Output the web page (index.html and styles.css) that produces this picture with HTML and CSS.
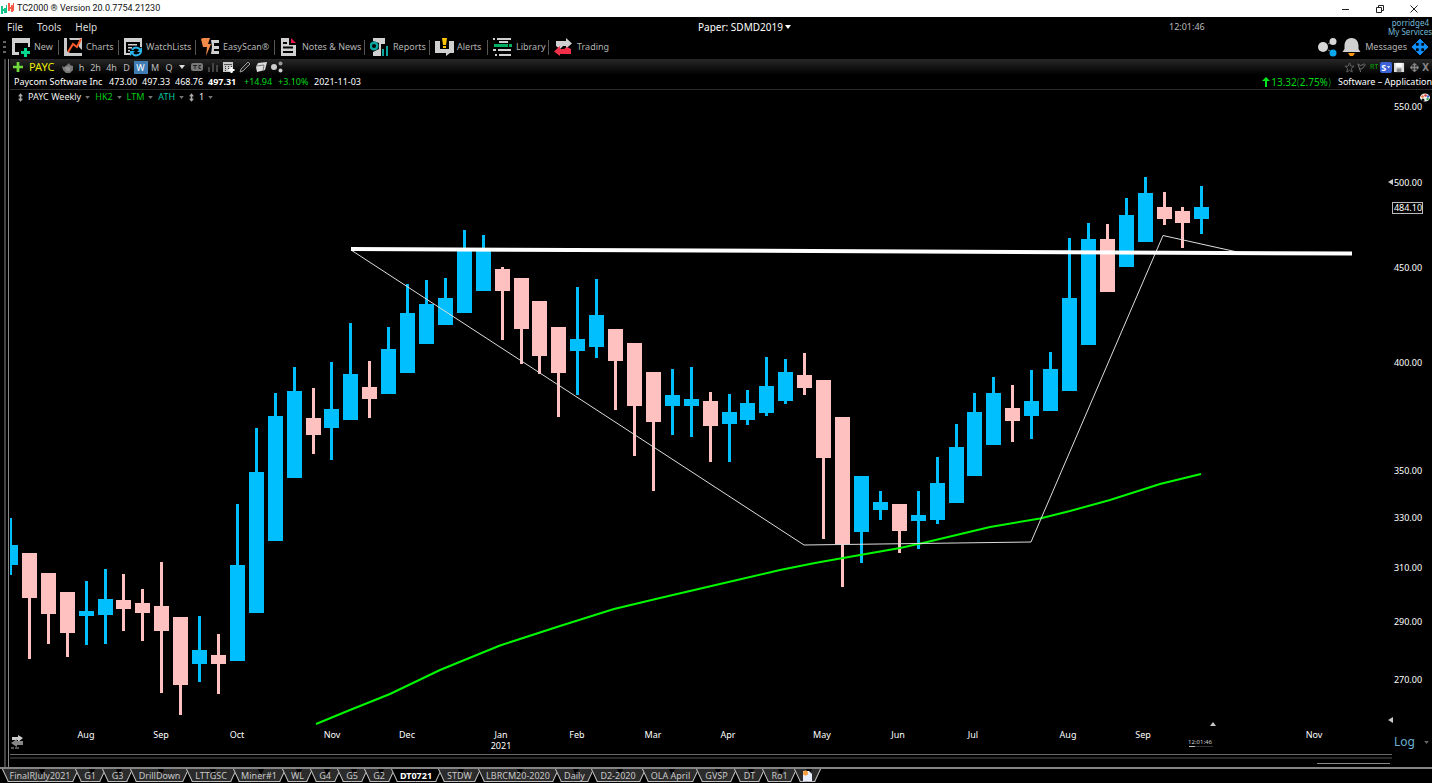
FILE: index.html
```html
<!DOCTYPE html>
<html lang="en">
<head>
<meta charset="utf-8">
<title>TC2000</title>
<link rel="stylesheet" href="styles.css">
</head>
<body>
<svg class="defs" aria-hidden="true">
  <symbol id="caret" viewBox="0 0 6 4"><path d="M0 0h6L3 4z" fill="currentColor"/></symbol>
  <symbol id="updown" viewBox="0 0 6 10"><path d="M3 0l3 3.500H4v3h2L3 10 0 6.500h2v-3H0z" fill="currentColor"/></symbol>
  <symbol id="move" viewBox="0 0 18 18"><path d="M9 0l4 4h-3v4h4V5l4 4-4 4v-3h-4v4h3l-4 4-4-4h3v-4H4v3L0 9l4-4v3h4V4H5z" fill="currentColor" stroke="currentColor"/></symbol>
</svg>

<header class="titlebar">
  <svg class="logo" viewBox="0 0 13 13"><g fill="#12c489"><path d="M0 4h2v8H0zM3 6h2v5H3zM0 7h5v2H0zM5 3h1v8H5z"/></g><g fill="#fa5a46"><path d="M7 1h2v8H7zM10 3h2v7h-2zM8 5h3v2H8zM12 1h1v8h-1z"/></g></svg>
  <span class="title">TC2000 ® Version 20.0.7754.21230</span>
  <button class="win" aria-label="Minimize"><svg viewBox="0 0 10 10"><path d="M1 5.500h7" stroke="#222" fill="none"/></svg></button>
  <button class="win" aria-label="Restore"><svg viewBox="0 0 10 10"><path d="M1.500 3.500h5v5h-5zM3.500 3V1.500h5v5H7" stroke="#222" fill="none"/></svg></button>
  <button class="win" aria-label="Close"><svg viewBox="0 0 10 10"><path d="M1.500 1.500l7 7M8.500 1.500l-7 7" stroke="#222" fill="none"/></svg></button>
</header>

<nav class="menubar">
  <div class="menus"><button>File</button><button>Tools</button><button>Help</button></div>
  <label class="account"><select aria-label="Account"><option>Paper: SDMD2019</option></select><svg class="caret"><use href="#caret"/></svg></label>
  <time class="clock">12:01:46</time>
  <div class="user"><a href="#">porridge4</a><a href="#">My Services</a></div>
</nav>

<nav class="toolbar">
  <svg class="grip" viewBox="0 0 3 14"><path d="M0 1h3v2H0zM0 6h3v2H0zM0 11h3v2H0z" fill="#666"/></svg>
  <button class="tool t-new"><svg viewBox="0 0 19 19"><path d="M0 0h18v9h-2V5H3v9h4v3H0z" fill="#d0d0d0"/><path d="M12 10h3v3h3v3h-3v3h-3v-3H9v-3h3z" fill="#00d890"/></svg>New</button>
  <button class="tool t-charts"><svg viewBox="0 0 19 19"><path d="M0 0h3v13l3 2h12v3H0zM5 0h13v12l-3-3V5l2-3H6z" fill="#c8c8c8"/><path d="M4 14l5-8 4 3 4-8" stroke="#ff5a2a" stroke-width="2" fill="none"/></svg>Charts</button>
  <button class="tool t-watch"><svg viewBox="0 0 19 19"><path d="M0 0h18v9h-2V4H2v11h4v2H0zM4 6h9v1.500H4zM4 9h4v1.500H4zM4 12h2v1.500H4z" fill="#d0d0d0"/><path d="M8 12a5 5 0 0 1 9 1M17 14a5 5 0 0 1-9 1" stroke="#2ab4ea" stroke-width="2" fill="none"/><path d="M18 9v5h-5zM6 18v-5h5z" fill="#2ab4ea"/></svg>WatchLists</button>
  <button class="tool t-scan"><svg viewBox="0 0 19 19"><path d="M2 0h7l-2 6h3L5 18l1-9H2L0 1z" fill="#f58a48"/><path d="M10 2h8v3h-5v3h5v3h-5v2h5v3h-8l1-7z" fill="#d0d0d0"/></svg>EasyScan®</button>
  <button class="tool t-notes"><svg viewBox="0 0 19 19"><path d="M1 0h8v7h7v11H1z" fill="#d0d0d0"/><path d="M3 5h4M3 9.500h10M3 14h10" stroke="#000" stroke-width="2"/><path d="M11 0l5 5h-5z" fill="#e8184c"/></svg>Notes &amp; News</button>
  <button class="tool t-reports"><svg viewBox="0 0 19 19"><path d="M3 0h12v6h-4v12H3v-4l6-3V5L3 3z" fill="#d0d0d0"/><circle cx="4" cy="8" r="3.300" fill="none" stroke="#0aa5a0" stroke-width="2.500"/><path d="M12 11h2v7h-2zM16 8h2v10h-2z" fill="#0aa5a0"/></svg>Reports</button>
  <button class="tool t-alerts"><svg viewBox="0 0 19 19"><path d="M0 3h5v8h9V3h5v12h-4l-4 3v-3H0z" fill="#d0d0d0"/><path d="M7 0h5l-1 7H8zM8 8h3v2H8z" fill="#ffc400"/></svg>Alerts</button>
  <button class="tool t-library"><svg viewBox="0 0 19 19"><path d="M0 1h2M4 1h14M0 12h3M5 12h13M2 17h2M6 17h12M6 4h9" stroke="#d0d0d0" stroke-width="2"/><path d="M1 7.500h14M16 7.500h3" stroke="#00b060" stroke-width="3"/></svg>Library</button>
  <button class="tool t-trading"><svg viewBox="0 0 19 19"><path d="M2 3h10V0l6 5.500-6 5V8H9l-3 3-4-3z" fill="#d0d0d0"/><path d="M0 13.500L6 8v3h4l3-2 4 2v5H6v2z" fill="#f03048"/></svg>Trading</button>
  <span class="spacer"></span>
  <button class="rtool" aria-label="Share"><svg viewBox="0 0 19 19"><circle cx="5" cy="9" r="5" fill="#d6d6d6"/><circle cx="15" cy="3.500" r="3.500" fill="#d6d6d6"/><circle cx="15" cy="15" r="3.500" fill="#08a8ea"/><path d="M10 6l2-1M10 12l2 1" stroke="#888"/></svg></button>
  <button class="rtool messages"><svg viewBox="0 0 19 19"><path d="M9.500 0c5 0 7 4 7 8v3l2 3h-18l2-3V8c0-4 2-8 7-8z" fill="#d0d0d0"/><path d="M6 15h7l-2 3H8z" fill="#ff9a10"/></svg>Messages</button>
  <button class="rtool blue" aria-label="Move"><svg><use href="#move"/></svg></button>
</nav>

<main class="workspace">
  <section class="panel">
    <div class="symbolbar">
      <button class="add" aria-label="Add"><svg viewBox="0 0 11 11"><path d="M4 0h3v4h4v3H7v4H4V7H0V4h4z" fill="#6ed83c"/></svg></button>
      <strong class="ticker">PAYC</strong>
      <svg class="ic hand" viewBox="0 0 11 11"><path d="M0 4l2 1 3-2 2-2 1 2 3 1v4l-3 3H4L1 8z" fill="#777"/><path d="M3 6h5M4 8h4" stroke="#aaa"/></svg>
      <div class="frames"><button>h</button><button>2h</button><button>4h</button><button>D</button><button class="on">W</button><button>M</button><button>Q</button><button aria-label="More"><svg class="caret"><use href="#caret"/></svg></button></div>
      <div class="icons">
        <svg viewBox="0 0 12 12"><rect y="2" width="12" height="8" rx="2" fill="#777"/><path d="M2 4.500h4M4 4.500V8M10 4.500H8v3h2" stroke="#222" fill="none"/></svg>
        <svg viewBox="0 0 12 12"><path d="M1 6h2v5H1zM5 2h2v9H5zM9 4h2v7H9z" fill="#444"/></svg>
        <svg viewBox="0 0 12 12"><path d="M0 1h10v10H0z" fill="#c8c8c8"/><path d="M1 3.500h8" stroke="#555"/><path d="M2 5.500h1M5 5.500h1M8 5.500h1M2 7.500h1M5 7.500h1M2 9.500h1" stroke="#333"/><path d="M8.500 6v6M5.500 9h6" stroke="#fff" stroke-width="2"/></svg>
        <svg viewBox="0 0 12 12"><path d="M1 11l1-3 7-7 2 2-7 7z" fill="#222" stroke="#999"/></svg>
        <svg viewBox="0 0 12 12"><path d="M3 2l9-1-2 8-8 2-1-5z" fill="#ddd"/><path d="M1 5l8-1-1 6" stroke="#777" fill="none"/></svg>
        <svg viewBox="0 0 12 12"><circle cx="3" cy="6" r="3" fill="#ccc"/><circle cx="9.500" cy="2.500" r="2" fill="#999"/><circle cx="9.500" cy="9.500" r="2" fill="#ccc"/></svg>
      </div>
      <span class="spacer"></span>
      <div class="status">
        <svg viewBox="0 0 12 12"><path d="M6 1l1.500 3.500H11L8 7l1 4-3-2-3 2 1-4-3-2.500h3.500z" fill="none" stroke="#666"/></svg>
        <svg viewBox="0 0 12 12"><path d="M4 11L1 2l3 2 4-2 1 1-3 4-3 1" fill="none" stroke="#777"/></svg>
        <span class="rt">RT</span>
        <button class="s">S<svg viewBox="0 0 6 4"><path d="M0 0h5L2.500 3z" fill="#fff"/></svg></button>
        <svg viewBox="0 0 12 12"><path d="M0 1h11v10H0z" fill="#ddd"/><path d="M3 7h5v4H3z" fill="#888"/><path d="M2 1h7v4H2z" fill="#fff"/></svg>
        <svg class="mv"><use href="#move"/></svg>
        <button class="x">X</button>
      </div>
    </div>
    <div class="quote">
      <span>Paycom Software Inc</span><span>473.00</span><span>497.33</span><span>468.76</span><b>497.31</b><span class="up">+14.94</span><span class="up">+3.10%</span><span>2021-11-03</span>
      <span class="rank"><svg viewBox="0 0 8 10"><path d="M4 0l4 4H5v6H3V4H0z" fill="#00e818"/></svg>13.32<i>(</i>2.75%<i>)</i></span><span class="sector">Software – Application</span>
    </div>
    <div class="legend">
      <svg class="ud"><use href="#updown"/></svg>
      <button>PAYC Weekly<svg class="caret"><use href="#caret"/></svg></button>
      <button class="hk">HK2<svg class="caret"><use href="#caret"/></svg></button>
      <button class="hk">LTM<svg class="caret"><use href="#caret"/></svg></button>
      <button class="ath">ATH<svg class="caret"><use href="#caret"/></svg></button>
      <svg class="ud"><use href="#updown"/></svg>
      <button>1<svg class="caret"><use href="#caret"/></svg></button>
      <span class="spacer"></span>
      <svg class="palette" viewBox="0 0 10 9"><ellipse cx="5" cy="4.500" rx="5" ry="4" fill="#eee"/><circle cx="2.500" cy="3.500" r="1.200" fill="#e66a28"/><circle cx="5.500" cy="2.500" r="1.200" fill="#e03030"/><circle cx="8" cy="3.500" r="1.200" fill="#3868d8"/><circle cx="7.500" cy="6" r="1.200" fill="#30a850"/><circle cx="3" cy="7" r="1.500" fill="#111"/></svg>
    </div>
    <div class="chart">
      <svg id="plot" class="plot" viewBox="10 102 1422 665" role="img" aria-label="PAYC weekly candlestick chart">
        <g id="candles"></g>
        <path class="average" d="M316 724L350 710 390 694 440 670 500 645.500 560 626 614 609 660 598 720 584 780 570 815 563 843 558 900 548 925 542.500 990 527 1040 518.500 1070 511 1110 500 1160 484 1201 474"/>
        <path class="trend" d="M351 250L804 545 1031 542 1163 235.500 1235 251.500"/>
        <path class="resistance" d="M351 249L1352 253.500"/>
        <g id="months" class="months"></g>
        <g id="prices" class="prices"></g>
        <rect x="1392.500" y="202.500" width="30" height="11" fill="#000" stroke="#bbb"/>
        <text class="last" x="1408" y="211">484.10</text>
        <path d="M1388 182l5-3v6zM1388 720l5-3v6zM1210 726h6l-3-4z" fill="#c8c8c8"/>
        <text class="tiny" x="1200" y="744">12:01:46</text>
        <path d="M1189 746.500h24" stroke="#333"/><path d="M1189 746.500h6" stroke="#bbb"/>
        <path d="M12 737h6v-2l5 3-5 4v-2h-6z" fill="#ccc"/><path d="M23 741h-6v-2l-6 4 6 4v-2h6z" fill="#888"/><path d="M11 748h3M15 748h4" stroke="#aaa"/>
        <path d="M10 754.500H1392" stroke="#666"/><path d="M10 758H1392" stroke="#2a2a2a" stroke-width="2"/>
        <path d="M1317 763.500H1390" stroke="#888"/>
      </svg>
      <label class="scale"><select aria-label="Scale"><option>Log</option></select><svg class="caret"><use href="#caret"/></svg></label>
    </div>
  </section>
</main>

<nav class="tabs">
  <button class="w73"><span>FinalRJuly2021</span></button><button><span>G1</span></button><button class="w28"><span>G3</span></button><button class="w56"><span>DrillDown</span></button><button class="w47"><span>LTTGSC</span></button><button class="w49"><span>Miner#1</span></button><button class="w28"><span>WL</span></button><button><span>G4</span></button><button><span>G5</span></button><button><span>G2</span></button><button class="w47 current"><span>DT0721</span></button><button class="w40"><span>STDW</span></button><button class="w77"><span>LBRCM20-2020</span></button><button class="w36"><span>Daily</span></button><button class="w51"><span>D2-2020</span></button><button class="w54"><span>OLA April</span></button><button class="w38"><span>GVSP</span></button><button class="w28"><span>DT</span></button><button class="w32"><span>Ro1</span></button><button class="w24" aria-label="New tab"><span><svg viewBox="0 0 9 11"><path d="M0 1h6l3 3v7H0z" fill="#e8eefc"/><circle cx="2.500" cy="3" r="2.500" fill="#f8a040"/></svg></span></button>
</nav>
<script src="chart.js"></script>
</body>
</html>
```
FILE: styles.css
```css
* { box-sizing: border-box; }
body { margin: 0; min-height: 100vh; display: flex; flex-direction: column; overflow: hidden; background: #000; color: #fff; font: 10px/12px "Noto Sans", "Open Sans", sans-serif; }
button, select { margin: 0; padding: 0; border: 0; background: none; color: inherit; font: inherit; white-space: nowrap; appearance: none; }
svg { display: block; flex: none; }
a { color: inherit; text-decoration: none; }
.defs { position: absolute; width: 0; height: 0; }
.spacer { flex: 1; }
.caret { width: 5px; height: 3px; }

.titlebar { height: 17px; display: flex; align-items: center; background: #fff; color: #111; font: 9px/17px Roboto, sans-serif; }
.logo { width: 13px; height: 13px; margin: 0 3px 0 1px; }
.title { flex: 1; }
.win { width: 34px; height: 17px; display: flex; justify-content: center; align-items: center; }
.win:last-child { margin-right: 1px; }
.win svg { width: 10px; height: 10px; }

.menubar { height: 19px; display: grid; grid-template-columns: 698fr 471fr 180fr 83fr; align-items: center; color: #ddd; }
.menus { display: flex; gap: 14px; padding-left: 7px; }
.account { display: flex; align-items: center; gap: 2px; color: #fff; }
.account .caret { width: 6px; height: 4px; }
.clock { font-size: 9px; color: #bbb; }
.user { display: flex; flex-direction: column; align-items: flex-end; color: #75b8d8; font-size: 8px; line-height: 9px; }
.user a:first-child { margin-right: 3px; }

.toolbar { height: 23px; padding-bottom: 1px; display: flex; align-items: center; color: #b4b4b4; font-size: 9px; }
.grip { width: 3px; height: 14px; margin: 0 6px 0 3px; }
.tool { display: flex; align-items: center; gap: 3px; height: 19px; position: relative; }
.tool svg { width: 19px; height: 19px; }
.tool + .tool::before { content: ""; position: absolute; left: -6px; top: 2px; height: 15px; border-left: 1px solid #555; }
.t-new { width: 52px; }
.t-charts { width: 60px; }
.t-watch { width: 77px; }
.t-scan { width: 79px; }
.t-notes { width: 90px; }
.t-reports { width: 65px; gap: 4px; }
.t-alerts { width: 58px; }
.t-library { width: 61px; gap: 4px; }
.t-trading { gap: 4px; }
.rtool { display: flex; align-items: center; gap: 4px; margin-right: 5px; }
.rtool svg { width: 19px; height: 19px; }
.messages { margin-right: 3px; }
.blue { color: #1090ff; margin: 0 4px 0 2px; }
.blue svg { width: 16px; height: 16px; }

.workspace { flex: 1; margin-left: 4px; padding-left: 2px; border-left: 2px solid #444; }
.panel { height: 100%; padding-left: 1px; border-left: 1px solid #888; }
.symbolbar { height: 16px; display: flex; align-items: center; padding-left: 3px; background: linear-gradient(#272727, #000); color: #bbb; }
.add svg { width: 10px; height: 10px; }
.ticker { width: 27px; margin: 0 6px; color: #e8e800; font: 11px/14px "Noto Sans", sans-serif; }
.ic { width: 11px; height: 11px; }
.frames { display: grid; grid-template-columns: 13px 15px 17px 13px 15px 14px 14px 12px; margin-left: 2px; font-size: 9px; justify-items: center; align-items: center; }
.frames .on { width: 14px; background: #3f7db4; color: #fff; }
.frames button { line-height: 13px; }
.frames .caret { width: 6px; height: 4px; color: #ddd; }
.icons { display: flex; gap: 4px; margin-left: 3px; }
.icons svg { width: 12px; height: 12px; }
.status { display: flex; align-items: center; gap: 2px; padding-right: 3px; }
.status > svg { width: 11px; height: 11px; }
.status .mv { width: 9px; height: 9px; margin-left: 3px; color: #888; }
.rt { color: #0a0; font-size: 7px; }
.s { display: flex; align-items: center; gap: 1px; height: 11px; padding: 0 1px; background: #3c64d8; border-radius: 2px; color: #fff; font-weight: bold; font-size: 9px; line-height: 11px; }
.s svg { width: 4px; height: 3px; }
.x { margin-left: 1px; font-weight: bold; color: #888; }

.quote { height: 15px; display: grid; grid-template-columns: 95px 33px 33px 33px 36px 34px 36px 60px 1fr auto; align-items: center; padding-left: 4px; border-bottom: 1px solid #2c2c2c; white-space: nowrap; font-size: 9px; }
.up { color: #00d818; }
.rank { display: flex; justify-content: flex-end; align-items: center; margin-right: 7px; color: #00d818; font-size: 10px; }
.rank svg { width: 8px; height: 10px; margin-right: 1px; }
.rank i { font-style: normal; color: #0a7818; }
.sector { font-size: 9px; }

.legend { height: 12px; padding-top: 2px; display: flex; align-items: center; gap: 5px; padding-left: 8px; font-size: 9px; color: #eee; }
.legend button { display: flex; align-items: center; gap: 4px; }
.legend .caret { color: #777; }
.legend .ud { width: 5px; height: 9px; color: #aaa; }
.legend .hk { color: #00c810; }
.legend .ath { color: #00c8a0; }
.palette { width: 10px; height: 9px; margin-right: 2px; }

.chart { position: relative; }
.plot { width: 100%; height: auto; overflow: visible; }
.wick-up, .body-up { fill: #00bfff; }
.wick-down, .body-down { fill: #ffc0c0; }
.average { fill: none; stroke: #00f800; stroke-width: 2; }
.trend { fill: none; stroke: #ddd; stroke-width: 1; }
.resistance { fill: none; stroke: #fff; stroke-width: 4; }
.months, .prices, .last { fill: #fff; font-size: 9px; text-anchor: middle; }
.tiny { fill: #ccc; font-size: 6px; text-anchor: middle; }
.scale { position: absolute; right: 3px; bottom: 17px; display: flex; align-items: center; gap: 9px; color: #6ab0d0; font-size: 12px; line-height: 16px; }
.scale .caret { color: #666; }

.tabs { display: flex; height: 16px; padding: 0 0 1px 5px; border-top: 2px solid #858585; color: #c8c8c8; font-size: 9px; }
.tabs button { position: relative; width: 27px; height: 13px; line-height: 13px; }
.tabs button::before, .tabs button::after { content: ""; position: absolute; top: 0; bottom: 0; background: #2b2b2b; border-bottom: 1px solid #bbb; }
.tabs button::before { left: 0; right: 50%; border-left: 1px solid #ccc; transform: skewX(25deg); }
.tabs button::after { left: 50%; right: 3px; border-right: 1px solid #ccc; transform: skewX(-25deg); }
.tabs span { position: relative; z-index: 1; display: flex; justify-content: center; padding-right: 3px; }
.tabs svg { width: 9px; height: 11px; }
.tabs .current { color: #fff; font-weight: bold; }
.tabs .current::before, .tabs .current::after { background: #000; }
.tabs .w24 { width: 24px; }
.tabs .w28 { width: 28px; }
.tabs .w32 { width: 32px; }
.tabs .w36 { width: 36px; }
.tabs .w38 { width: 38px; }
.tabs .w40 { width: 40px; }
.tabs .w47 { width: 47px; }
.tabs .w49 { width: 49px; }
.tabs .w51 { width: 51px; }
.tabs .w54 { width: 54px; }
.tabs .w56 { width: 56px; }
.tabs .w73 { width: 73px; }
.tabs .w77 { width: 77px; }
```
FILE: chart.js
```js
// Each weekly bar: direction, high, body top, body bottom, low (plot units).
const bars = [
  ["u",518,545,565,575],["d",553,553,598,659],["d",573,573,614,644],["d",592,592,633,657],
  ["u",581,611,616,645],["u",569,599,615,644],["d",574,600,609,631],["d",589,603,613,641],
  ["d",562,606,631,693],["d",617,617,685,715],["u",616,650,664,682],["d",634,655,664,694],
  ["u",504,565,661,661],["u",428,472,613,613],["u",393,416,541,541],["u",367,391,478,478],
  ["d",388,418,435,454],["u",362,409,428,460],["u",323,374,420,420],["d",361,387,399,418],
  ["u",327,349,394,394],["u",284,313,373,373],["u",280,304,344,344],["u",278,298,325,325],
  ["u",230,248,313,313],["u",235,249,291,291],["d",267,269,291,340],["d",278,278,329,364],
  ["d",301,301,356,374],["d",327,327,373,417],["u",287,339,351,395],["u",279,315,347,358],
  ["d",329,329,361,410],["d",343,343,406,456],["d",372,372,422,491],["u",369,395,406,435],
  ["u",367,399,406,437],["d",392,401,426,462],["u",394,412,424,462],["u",390,403,420,425],
  ["u",357,386,413,416],["u",359,372,401,404],["d",353,375,388,395],["d",380,380,458,539],
  ["d",417,417,544,587],["u",476,476,532,563],["u",491,502,510,520],["d",504,504,531,553],
  ["u",491,515,521,549],["u",457,483,520,524],["u",424,447,503,503],["u",393,412,476,476],
  ["u",377,393,445,445],["d",385,408,421,442],["u",370,401,416,439],["u",352,369,411,411],
  ["u",238,298,391,391],["u",223,239,345,345],["d",224,239,292,292],["u",198,215,267,267],
  ["u",177,193,242,242],["d",192,207,219,225],["d",207,211,223,248],["u",186,207,219,234]
];
const months = [["Aug",86],["Sep",161],["Oct",237],["Nov",332],["Dec",407],["Jan",501],["Feb",577],["Mar",653],["Apr",728],["May",822],["Jun",898],["Jul",973],["Aug",1068],["Sep",1143],["Nov",1314]];
const prices = [[550,106],[500,182],[450,267],[400,362],[350,470],[330,517],[310,567],[290,621],[270,679]];

const NS = "http://www.w3.org/2000/svg";
function add(parent, tag, attrs, text) {
  const el = document.createElementNS(NS, tag);
  for (const key in attrs) el.setAttribute(key, attrs[key]);
  if (text) el.textContent = text;
  document.getElementById(parent).appendChild(el);
}

bars.forEach(([dir, high, top, bottom, low], i) => {
  const name = dir === "u" ? "up" : "down";
  const left = Math.round(3 + 18.91 * i);
  const clip = Math.max(left, 11);
  add("candles", "rect", { class: "body-" + name, x: clip, y: top, width: left + 15 - clip, height: bottom - top });
  const wick = Math.max(left + 6, 10);
  add("candles", "rect", { class: "wick-" + name, x: wick, y: high, width: left + 9 - wick, height: low - high });
});
months.forEach(([label, x]) => add("months", "text", { x, y: 738 }, label));
add("months", "text", { x: 501, y: 749 }, "2021");
prices.forEach(([value, y]) => add("prices", "text", { x: 1408, y: y + 4 }, value.toFixed(2)));
```
